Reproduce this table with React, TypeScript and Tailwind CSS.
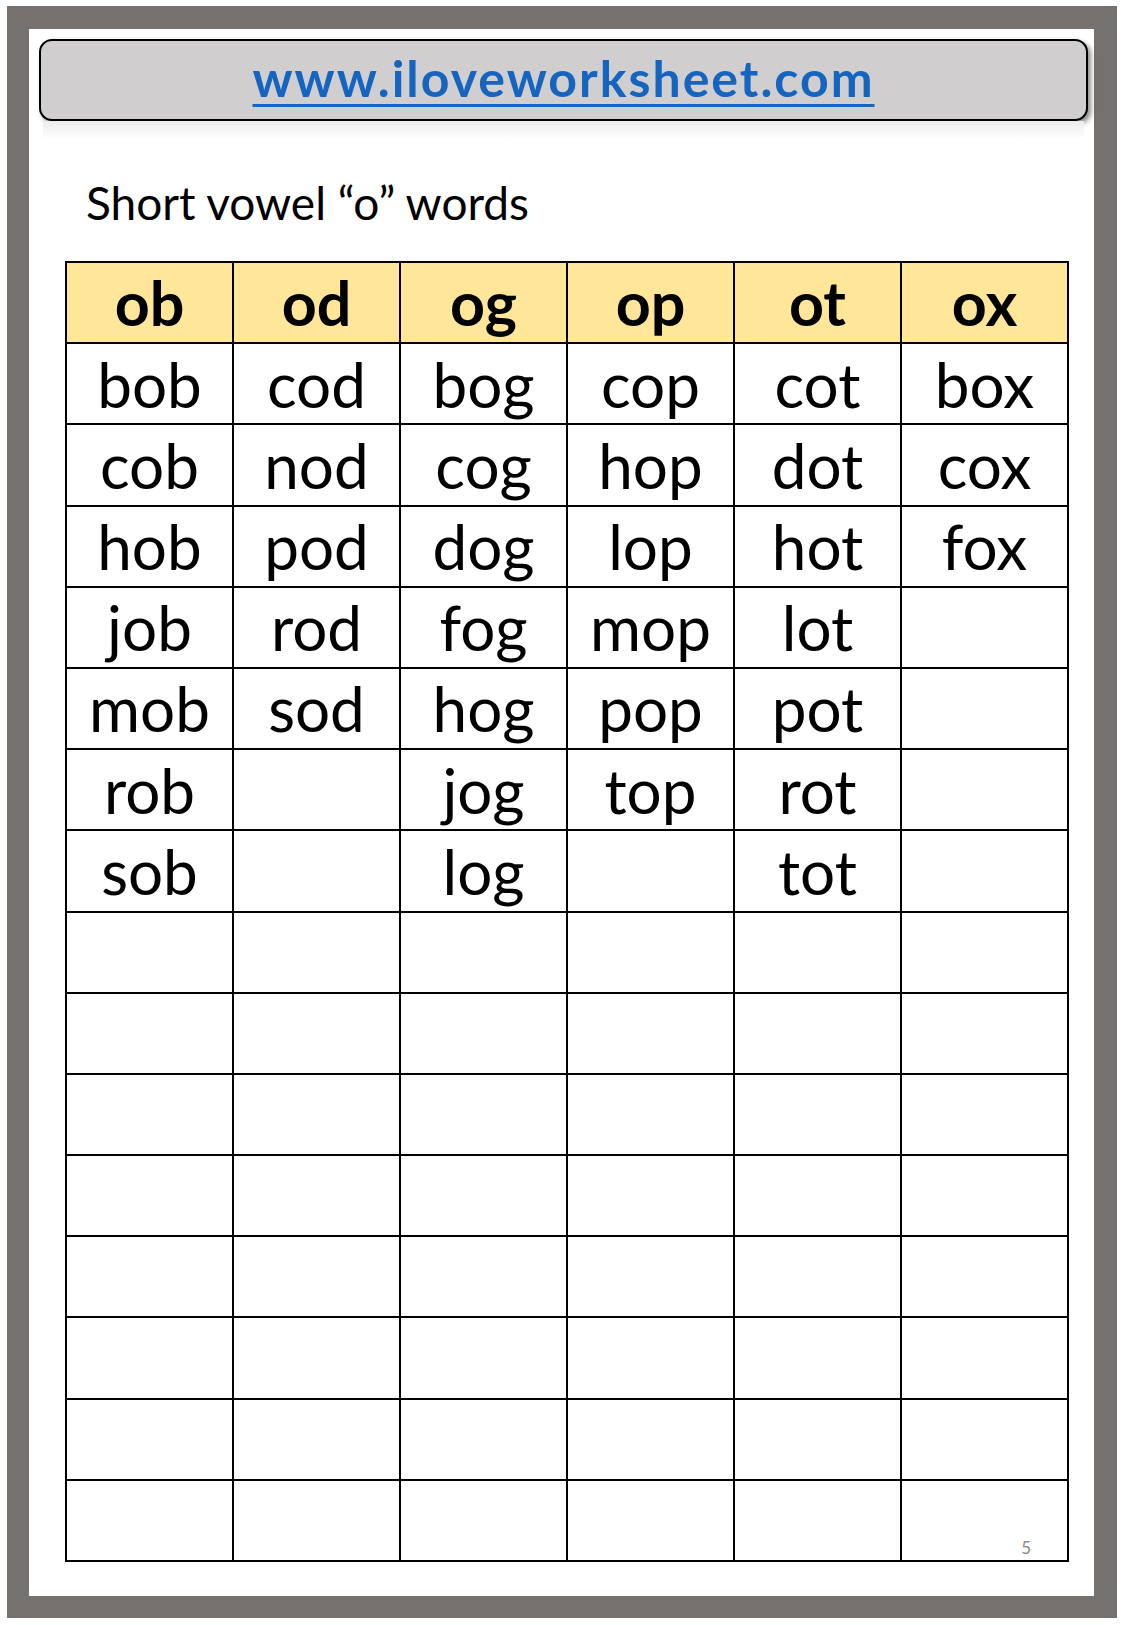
const HEADS = ["ob", "od", "og", "op", "ot", "ox"];

const COLS: string[][] = [
  ["bob", "cob", "hob", "job", "mob", "rob", "sob"],
  ["cod", "nod", "pod", "rod", "sod"],
  ["bog", "cog", "dog", "fog", "hog", "jog", "log"],
  ["cop", "hop", "lop", "mop", "pop", "top"],
  ["cot", "dot", "hot", "lot", "pot", "rot", "tot"],
  ["box", "cox", "fox"],
];

const ROWS = 15;
const FONT = { fontFamily: "Lato, 'Open Sans', sans-serif" };

export default function App() {
  const rows = Array.from({ length: ROWS }, (_, r) => COLS.map((c) => c[r] ?? ""));

  return (
    <div className="w-[1125px] h-[1625px] bg-white pt-[6px] pl-[7px]" style={FONT}>
      <div className="w-[1110px] h-[1612px] bg-[#75716f] pt-[23px] pl-[22px] pr-[23px] pb-[22px]">
        <div className="w-full h-full bg-white pt-[10px] pl-[10px] pr-[6px]">
          {/* site banner */}
          <div className="h-[82px] rounded-[13px] border-2 border-black bg-[#d0cece] flex items-center justify-center shadow-[3px_3px_5px_rgba(0,0,0,0.45)]">
            <span className="text-[50px] font-bold leading-none tracking-[2px] text-[#1565c0] underline decoration-[3px] underline-offset-[7px] pb-[4px]">
              www.iloveworksheet.com
            </span>
          </div>
          <div className="h-[18px] mx-[4px] bg-gradient-to-b from-[#ececec] to-white" />

          <div className="mt-[38px] pl-[47px] text-[46px] leading-[52px] text-black">
            Short vowel “o” words
          </div>

          {/* word table */}
          <div className="mt-[32px] ml-[26px] w-[1004px] h-[1301px] bg-black p-[2px] grid grid-cols-6 grid-rows-[repeat(16,minmax(0,1fr))] gap-[2px]">
            {HEADS.map((h) => (
              <div
                key={h}
                className="bg-[#ffe699] flex items-center justify-center text-[61px] font-bold leading-[1.2] text-black"
              >
                {h}
              </div>
            ))}
            {rows.map((row, r) =>
              row.map((w, c) => (
                <div
                  key={`${r}-${c}`}
                  className="relative bg-white flex items-center justify-center text-[62px] leading-[1.2] text-black"
                >
                  {w}
                  {r === ROWS - 1 && c === 5 && (
                    <span className="absolute right-[36px] bottom-[4px] text-[17px] leading-none text-[#8a8a8a]">
                      5
                    </span>
                  )}
                </div>
              ))
            )}
          </div>
        </div>
      </div>
    </div>
  );
}
